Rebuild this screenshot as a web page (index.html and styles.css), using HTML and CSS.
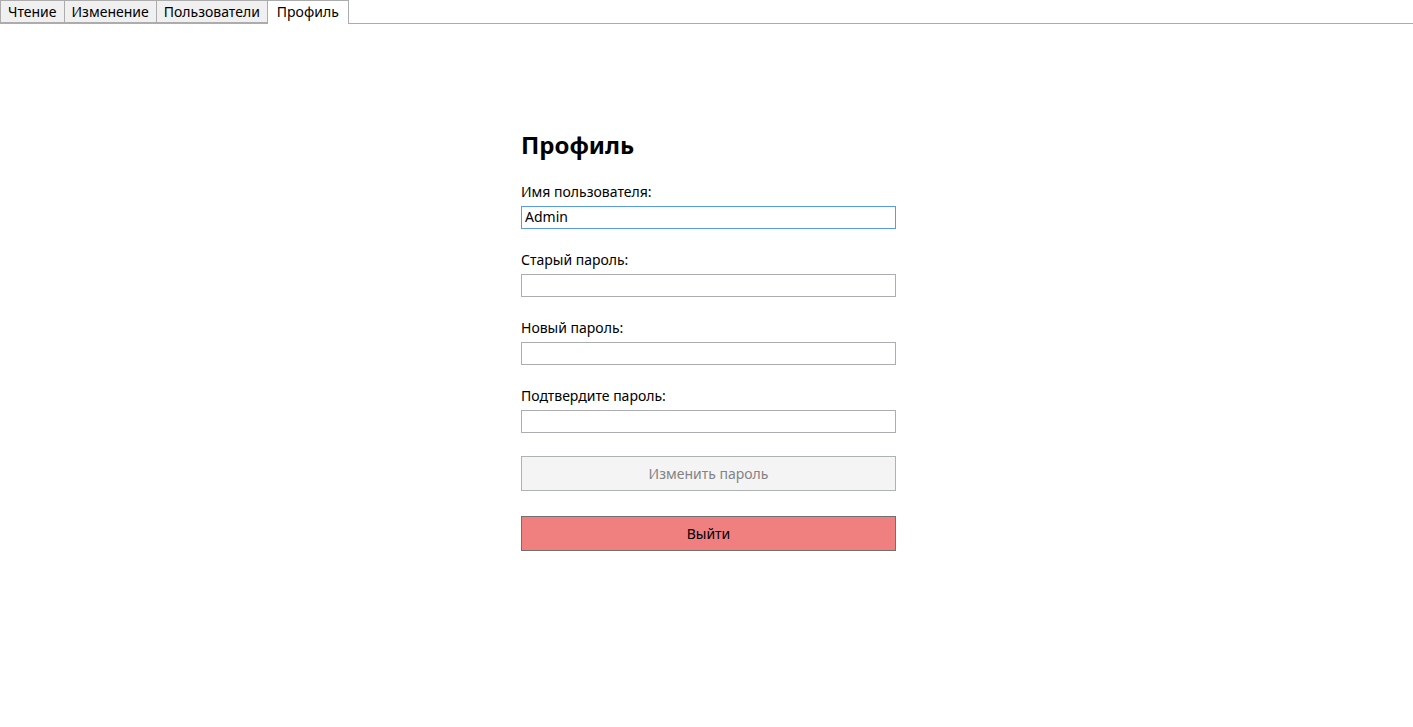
FILE: index.html
```html
<!DOCTYPE html>
<html lang="ru">
<head>
<meta charset="utf-8">
<title>Профиль</title>
<link rel="stylesheet" href="styles.css">
</head>
<body>
<div class="tabstrip">
  <div class="tab">Чтение</div>
  <div class="tab">Изменение</div>
  <div class="tab">Пользователи</div>
  <div class="tab active">Профиль</div>
</div>
<main class="content">
  <form class="profile">
    <h1 class="title">Профиль</h1>
    <label class="label">Имя пользователя:</label>
    <div class="input focused">Admin</div>
    <label class="label">Старый пароль:</label>
    <div class="input"></div>
    <label class="label">Новый пароль:</label>
    <div class="input"></div>
    <label class="label">Подтвердите пароль:</label>
    <div class="input"></div>
    <div class="btn disabled">Изменить пароль</div>
    <div class="btn logout">Выйти</div>
  </form>
</main>
</body>
</html>
```
FILE: styles.css
```css
* { box-sizing: border-box; }
html, body { margin: 0; padding: 0; background: #fff; }
body {
  font-family: "Noto Sans", "Open Sans", sans-serif;
  font-size: 14px;
  color: #000;
  width: 1413px;
  height: 727px;
  overflow: hidden;
}
.tabstrip {
  display: flex;
  height: 24px;
  border-bottom: 1px solid #acacac;
  align-items: flex-start;
}
.tab {
  height: 23px;
  padding: 0 7px;
  background: #f0f0f0;
  border: 1px solid #acacac;
  border-left: none;
  font-size: 14px;
  line-height: 21px;
  color: #000;
}
.tab:first-child { border-left: 1px solid #acacac; }
.tab.active {
  background: #fff;
  height: 24px;
  border-bottom: none;
  padding: 0 9px;
  margin-left: -1px;
  border-left: 1px solid #acacac;
}
.content {
  display: flex;
  justify-content: center;
  padding-top: 105px;
}
.profile {
  width: 375px;
  margin-left: 4px;
  display: flex;
  flex-direction: column;
}
.title {
  margin: 0 0 22px 0;
  font-size: 24px;
  font-weight: 700;
  line-height: 32px;
}
.label {
  font-size: 14px;
  line-height: 18px;
  margin-bottom: 5px;
}
.input {
  height: 23px;
  border: 1px solid #abadb3;
  margin-bottom: 22px;
  padding: 0 3px;
  font-size: 14px;
  line-height: 20px;
}
.input.focused { border-color: #569de5; }
.btn {
  height: 35px;
  display: flex;
  align-items: center;
  justify-content: center;
  font-size: 14px;
}
.btn.disabled {
  margin-top: 1px;
  background: #f4f4f4;
  border: 1px solid #adb2b5;
  color: #838383;
}
.btn.logout {
  margin-top: 25px;
  background: #f08080;
  border: 1px solid #707070;
  color: #000;
}
```
